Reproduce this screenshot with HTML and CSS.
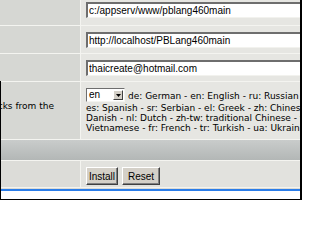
FILE: index.html
```html
<!DOCTYPE html>
<html>
<head>
<meta charset="utf-8">
<link rel="stylesheet" href="styles.css">
</head>
<body>
<div class="page">
  <div class="upper">
    <div class="row r-first">
      <div class="lab"></div>
      <div class="val"><input class="field" type="text" value="c:/appserv/www/pblang460main"></div>
    </div>
    <div class="row">
      <div class="lab"></div>
      <div class="val"><input class="field" type="text" value="http://localhost/PBLang460main"></div>
    </div>
    <div class="row">
      <div class="lab"></div>
      <div class="val"><input class="field" type="text" value="thaicreate@hotmail.com"></div>
    </div>
  </div>
  <div class="lower">
    <div class="row r-lang">
      <div class="lab lab-lang">
        <div class="labtext">Select the language for the text blocks from the<br>list below:</div>
      </div>
      <div class="val help">
        <div class="line1">
          <span class="select"><span class="sel-text">en</span><span class="sel-btn"><svg width="5" height="3" viewBox="0 0 5 3"><path d="M0 0H5L2.5 3Z" fill="#000"/></svg></span></span>
          <span>de: German - en: English - ru: Russian - fr: French</span>
        </div>
        <div class="hline">es: Spanish - sr: Serbian - el: Greek - zh: Chinese - da:</div>
        <div class="hline">Danish - nl: Dutch - zh-tw: traditional Chinese - vi:</div>
        <div class="hline">Vietnamese - fr: French - tr: Turkish - ua: Ukrainian</div>
      </div>
    </div>
    <div class="band"></div>
    <div class="row r-actions">
      <div class="lab"></div>
      <div class="val buttons">
        <button class="btn btn-install" type="button">Install</button>
        <button class="btn btn-reset" type="button">Reset</button>
      </div>
    </div>
    <div class="footer"><div class="footer-bar"></div></div>
  </div>
</div>
</body>
</html>
```
FILE: styles.css
```css
html, body {
  margin: 0;
  padding: 0;
  background: #ffffff;
}
body {
  width: 302px;
  height: 200px;
  overflow: hidden;
}
.page {
  width: 300px;
  height: 200px;
  border-right: 2px solid #000;
  overflow: hidden;
  display: flex;
  flex-direction: column;
}
.upper {
  display: flex;
  flex-direction: column;
  gap: 1px;
  background: #f4f4f0;
  margin-top: -4px;
}
.lower {
  display: flex;
  flex-direction: column;
  gap: 1px;
  padding-top: 1px;
  background: #f4f4f0;
  border-left: 1px solid #000;
  flex: 1;
}
.row {
  display: grid;
  grid-template-columns: 80px 1fr;
  column-gap: 1px;
  height: 27px;
}
.lower .row {
  grid-template-columns: 79px 1fr;
}
.r-first {
  height: 29px;
}
.lab {
  background: #d6d7d3;
  overflow: hidden;
}
.val {
  background: #e6e6e2;
  padding: 6px 0 0 5px;
  overflow: hidden;
  min-width: 0;
}
.field {
  display: block;
  box-sizing: border-box;
  width: 260px;
  height: 16px;
  margin: 0;
  padding: 0 0 0 1px;
  border-style: solid;
  border-width: 2px 0 1px 2px;
  border-color: #6e6e6e #ffffff #f2f2ee #6e6e6e;
  background: #fff;
  font-family: "Liberation Sans", Arial, sans-serif;
  font-size: 10px;
  color: #000;
  outline: none;
}
.r-lang {
  height: 57px;
}
.lab-lang {
  display: flex;
  justify-content: flex-end;
  align-items: center;
  padding-right: 26px;
}
.labtext {
  flex: none;
  white-space: nowrap;
  font-family: "DejaVu Sans", Verdana, sans-serif;
  font-size: 9px;
  line-height: 10px;
  color: #000;
  padding-top: 1px;
}
.help {
  white-space: nowrap;
  font-family: "DejaVu Sans", Verdana, sans-serif;
  font-size: 9px;
  line-height: 10px;
  color: #000;
}
.line1 {
  display: flex;
  align-items: center;
  gap: 3px;
  height: 15px;
  padding-top: 0;
}
.hline {
  height: 10px;
}
.select {
  flex: none;
  display: inline-flex;
  align-items: center;
  box-sizing: border-box;
  width: 39px;
  height: 14px;
  margin-top: -1px;
  border-style: solid;
  border-width: 1px;
  border-color: #6e6e6e #f4f4f0 #f4f4f0 #6e6e6e;
  background: #fff;
}
.sel-text {
  flex: 1;
  padding-left: 2px;
  font-family: "Liberation Sans", Arial, sans-serif;
  font-size: 10px;
}
.sel-btn {
  box-sizing: border-box;
  width: 10px;
  height: 10px;
  margin-right: 1px;
  background: #d4d0c8;
  border-style: solid;
  border-width: 1px;
  border-color: #ffffff #404040 #404040 #ffffff;
  display: flex;
  align-items: center;
  justify-content: center;
}
.band {
  height: 20px;
  background: linear-gradient(#c9cccb, #b3b7b6);
}
.r-actions {
  height: 26px;
}
.r-actions .lab {
  background: #dcdcd8;
}
.r-actions .val {
  background: #e2e2de;
}
.buttons {
  display: flex;
  gap: 4px;
  align-items: flex-start;
}
.btn {
  box-sizing: border-box;
  height: 18px;
  margin: 0;
  padding: 0;
  background: #d4d0c8;
  border-style: solid;
  border-width: 1px;
  border-color: #ffffff #404040 #404040 #ffffff;
  box-shadow: inset -1px -1px 0 #808080;
  font-family: "Liberation Sans", Arial, sans-serif;
  font-size: 10px;
  color: #000;
  text-align: center;
}
.btn-install {
  width: 32px;
}
.btn-reset {
  width: 38px;
}
.footer {
  border-top: 1px solid #dadad6;
  background: #fff;
  flex: 1;
}
.footer-bar {
  height: 100%;
  box-sizing: border-box;
  border-top: 2px solid #2b7de9;
  border-bottom: 1px solid #000;
}
```
